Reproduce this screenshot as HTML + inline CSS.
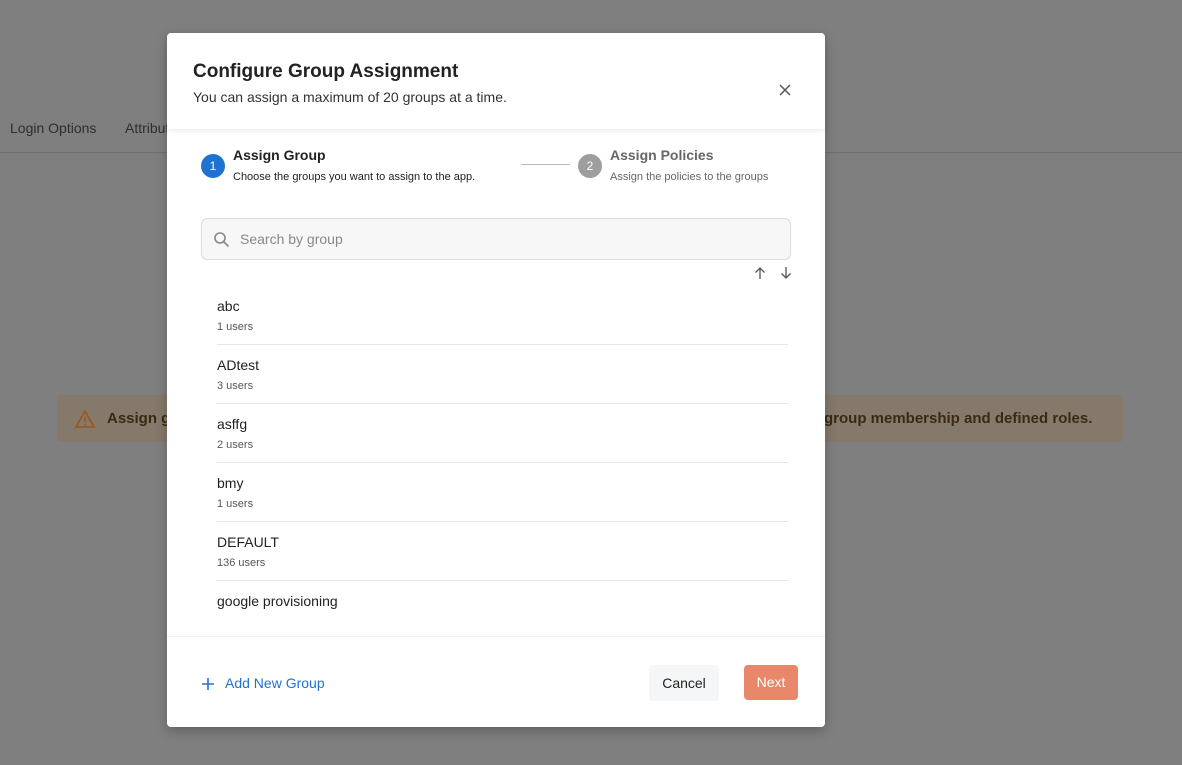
<!DOCTYPE html>
<html><head><style>
*{box-sizing:border-box;margin:0;padding:0}
body{width:1182px;height:765px;background:#7f7f7f;font-family:"Liberation Sans",sans-serif;position:relative;overflow:hidden}
.tab{position:absolute;top:120px;font-size:14px;color:#2e2e2e}
.line{position:absolute;left:0;right:0;top:152px;height:1px;background:#6e6e6e}
.warn{position:absolute;left:57px;top:395px;width:1066px;height:47px;background:#85796c;border-radius:3px}
.warn span{position:absolute;top:15px;font-size:15px;font-weight:bold;color:#3a2a14}
.modal{position:absolute;left:167px;top:33px;width:658px;height:694px;background:#fff;border-radius:4px;box-shadow:0 4px 12px rgba(0,0,0,.25)}
.hdr{height:96px;box-shadow:0 2px 4px rgba(0,0,0,.08);position:relative}
.hdr h1{position:absolute;left:26px;top:28px;font-size:19px;font-weight:bold;color:#222}
.hdr p{position:absolute;left:26px;top:56px;font-size:14px;color:#333}
.x{position:absolute;left:611px;top:50px}
.circ{position:absolute;width:24px;height:24px;border-radius:50%;color:#fff;font-size:12px;text-align:center;line-height:24px}
.t{position:absolute;font-size:14px;font-weight:bold}
.s{position:absolute;font-size:11px}
.search{position:absolute;left:34px;top:185px;width:590px;height:42px;border:1px solid #dcdcdc;border-radius:6px;background:#f7f7f8}
.search span{position:absolute;left:38px;top:12px;font-size:14px;color:#888}
.item{position:absolute;left:50px;width:571px;height:59px;border-bottom:1px solid #e6e6e6}
.item b{position:absolute;top:12px;font-size:14px;font-weight:normal;color:#222}
.item i{position:absolute;top:35px;font-style:normal;font-size:11px;color:#555}
.ftr{position:absolute;left:0;right:0;top:603px;height:91px;border-top:1px solid #f2f2f2}
</style></head><body>
<div class="tab" style="left:10px">Login Options</div>
<div class="tab" style="left:125px">Attributes</div>
<div class="line"></div>
<div class="warn">
<svg style="position:absolute;left:18px;top:15px" width="20" height="18" viewBox="0 0 20 18"><path d="M10 1L19 17H1Z" fill="none" stroke="#a0521a" stroke-width="1.6"/><path d="M10 7v5M10 14v1.2" stroke="#a0521a" stroke-width="1.6"/></svg>
<span style="left:50px">Assign groups</span>
<span style="left:767px">group membership and defined roles.</span>
</div>
<div class="modal">
<div class="hdr"><h1>Configure Group Assignment</h1><p>You can assign a maximum of 20 groups at a time.</p>
<svg class="x" width="14" height="14" viewBox="0 0 14 14"><path d="M2 2L12 12M12 2L2 12" stroke="#555" stroke-width="1.5"/></svg></div>
<div class="circ" style="left:34px;top:121px;background:#1f72cf">1</div>
<div class="t" style="left:66px;top:114px;color:#222">Assign Group</div>
<div class="s" style="left:66px;top:138px;color:#222">Choose the groups you want to assign to the app.</div>
<div style="position:absolute;left:354px;top:131px;width:49px;height:1px;background:#bbb"></div>
<div class="circ" style="left:411px;top:121px;background:#9e9e9e">2</div>
<div class="t" style="left:443px;top:114px;color:#666">Assign Policies</div>
<div class="s" style="left:443px;top:138px;color:#666">Assign the policies to the groups</div>
<div class="search"><svg style="position:absolute;left:11px;top:12px" width="17" height="17" viewBox="0 0 17 17"><circle cx="7" cy="7" r="5" fill="none" stroke="#888" stroke-width="1.6"/><path d="M11 11l4.5 4.5" stroke="#888" stroke-width="1.6"/></svg><span>Search by group</span></div>
<svg style="position:absolute;left:586px;top:233px" width="40" height="14" viewBox="0 0 40 14"><path d="M7 13V2M2.5 6.5L7 2l4.5 4.5M33 1v11M28.5 7.5L33 12l4.5-4.5" fill="none" stroke="#555" stroke-width="1.3"/></svg>
<div class="item" style="top:253px"><b>abc</b><i>1 users</i></div>
<div class="item" style="top:312px"><b>ADtest</b><i>3 users</i></div>
<div class="item" style="top:371px"><b>asffg</b><i>2 users</i></div>
<div class="item" style="top:430px"><b>bmy</b><i>1 users</i></div>
<div class="item" style="top:489px"><b>DEFAULT</b><i>136 users</i></div>
<div class="item" style="top:548px;border:none"><b>google provisioning</b></div>
<div class="ftr">
<svg style="position:absolute;left:34px;top:40px" width="14" height="14" viewBox="0 0 14 14"><path d="M7 1v12M1 7h12" stroke="#1f72cf" stroke-width="1.6"/></svg>
<div style="position:absolute;left:58px;top:38px;font-size:14px;color:#1f72cf">Add New Group</div>
<div style="position:absolute;left:482px;top:28px;width:70px;height:36px;background:#f5f6f7;border-radius:4px;font-size:14px;color:#222;text-align:center;line-height:36px">Cancel</div>
<div style="position:absolute;left:577px;top:28px;width:54px;height:35px;background:#e8876a;border-radius:4px;font-size:14px;color:#fff;text-align:center;line-height:35px">Next</div>
</div>
</div>
</body></html>
